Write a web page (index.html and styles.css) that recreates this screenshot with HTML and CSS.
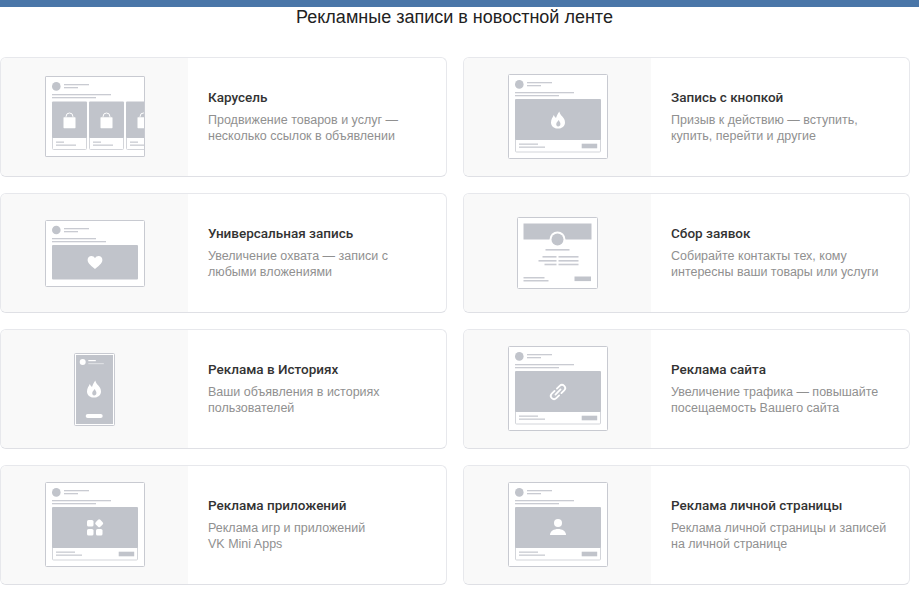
FILE: index.html
```html
<!DOCTYPE html>
<html lang="ru">
<head>
  <meta charset="UTF-8">
  <title>Рекламные записи в новостной ленте</title>
  <link rel="stylesheet" href="styles.css">
</head>
<body>

  <!-- shared parts of the previews -->
  <svg class="defs" width="0" height="0" aria-hidden="true">
    <defs>
      <symbol id="post-head" viewBox="0 0 100 25" width="100" height="25">
        <circle class="ph-dark" cx="11.3" cy="10.4" r="4.3"/>
        <rect class="ph-line" x="19" y="8" width="25" height="1.3"/>
        <rect class="ph-line" x="19" y="11" width="14" height="1.3"/>
        <rect class="ph-line" x="7" y="18" width="59" height="1.3"/>
        <rect class="ph-line" x="7" y="21" width="44" height="1.3"/>
      </symbol>
      <symbol id="post" viewBox="0 0 100 85" width="100" height="85">
        <rect class="ph-frame" x="0.5" y="0.5" width="99" height="84" rx="1"/>
        <use href="#post-head"/>
        <rect class="ph-foot" x="7.5" y="60" width="85" height="18" rx="1"/>
        <rect class="ph-dark" x="7" y="25" width="86" height="41" rx="1"/>
        <rect class="ph-line" x="11" y="69.5" width="19" height="1.3"/>
        <rect class="ph-line" x="11" y="72.5" width="26" height="1.3"/>
        <rect class="ph-dark" x="73.7" y="69.7" width="15.5" height="4.6"/>
      </symbol>
      <path id="flame" fill-rule="evenodd" d="M1.4-8.5C1.8-4.4 7-2.8 7 2.4 7 6 4 8.5 0 8.5S-7 6-7 2.4C-7-.8-5.2-2.8-4.2-5-3.7-3.6-3-2.6-2-2-1.4-4-.2-6.6 1.4-8.5ZM.4 6.6C2.2 6.4 2.8 4.4 2.2 2.8 1.8 1.8 1.2 1 .8 0-.1 1.2-.8 1.8-1.4 2.8-2.3 4.2-1.6 6.6.4 6.6Z"/>
      <g id="bag">
        <rect x="-6" y="-2.8" width="12" height="11" rx="0.6"/>
        <path class="ph-handle" d="M-3.4-2.8V-3.6A3.4 3.4 0 0 1 3.4-3.6V-2.8"/>
      </g>
    </defs>
  </svg>

  <div class="topbar"></div>
  <h1 class="page-title">Рекламные записи в новостной ленте</h1>

  <div class="ad-grid">

    <div class="ad-card">
      <div class="ad-preview">
        <svg width="100" height="81" viewBox="0 0 100 81">
          <rect class="ph-frame" x="0.5" y="0.5" width="99" height="80" rx="1"/>
          <use href="#post-head"/>
          <rect class="ph-foot" x="7.5" y="50" width="34" height="23.5" rx="1"/>
          <rect class="ph-dark" x="7" y="25.5" width="35" height="36.5" rx="1"/>
          <rect class="ph-foot" x="44.5" y="50" width="34" height="23.5" rx="1"/>
          <rect class="ph-dark" x="44" y="25.5" width="35" height="36.5" rx="1"/>
          <rect class="ph-foot" x="81.5" y="50" width="34" height="23.5" rx="1"/>
          <rect class="ph-dark" x="81" y="25.5" width="35" height="36.5" rx="1"/>
          <rect class="ph-line" x="11" y="65.5" width="8" height="1.3"/>
          <rect class="ph-line" x="11" y="68.5" width="20" height="1.3"/>
          <rect class="ph-line" x="48" y="65.5" width="8" height="1.3"/>
          <rect class="ph-line" x="48" y="68.5" width="20" height="1.3"/>
          <rect class="ph-line" x="85" y="65.5" width="8" height="1.3"/>
          <rect class="ph-line" x="85" y="68.5" width="14" height="1.3"/>
          <use class="ph-icon" href="#bag" x="24.5" y="44"/>
          <use class="ph-icon" href="#bag" x="61.5" y="44"/>
          <use class="ph-icon" href="#bag" x="98.5" y="44"/>
          <rect class="ph-edge" x="0.5" y="0.5" width="99" height="80" rx="1"/>
        </svg>
      </div>
      <div class="ad-text">
        <div class="ad-title">Карусель</div>
        <div class="ad-desc">Продвижение товаров и услуг —<br>несколько ссылок в объявлении</div>
      </div>
    </div>

    <div class="ad-card">
      <div class="ad-preview">
        <svg width="100" height="85" viewBox="0 0 100 85">
          <use href="#post"/>
          <use class="ph-icon" href="#flame" x="50" y="46"/>
        </svg>
      </div>
      <div class="ad-text">
        <div class="ad-title">Запись с кнопкой</div>
        <div class="ad-desc">Призыв к действию — вступить,<br>купить, перейти и другие</div>
      </div>
    </div>

    <div class="ad-card">
      <div class="ad-preview">
        <svg class="no-lift" width="100" height="67" viewBox="0 0 100 67">
          <rect class="ph-frame" x="0.5" y="0.5" width="99" height="66" rx="1"/>
          <circle class="ph-dark" cx="11.3" cy="10" r="4.3"/>
          <rect class="ph-line" x="19" y="8" width="25" height="1.3"/>
          <rect class="ph-line" x="19" y="11" width="14" height="1.3"/>
          <rect class="ph-line" x="7" y="18" width="44" height="1.3"/>
          <rect class="ph-line" x="7" y="21" width="54" height="1.3"/>
          <rect class="ph-dark" x="7" y="25" width="86" height="34.5" rx="1"/>
          <path class="ph-icon" d="M50 49C47 46.4 42.6 43.6 42.6 40 42.6 37.6 44.4 36 46.4 36 47.9 36 49.2 36.8 50 38.2 50.8 36.8 52.1 36 53.6 36 55.6 36 57.4 37.6 57.4 40 57.4 43.6 53 46.4 50 49Z"/>
        </svg>
      </div>
      <div class="ad-text">
        <div class="ad-title">Универсальная запись</div>
        <div class="ad-desc">Увеличение охвата — записи с<br>любыми вложениями</div>
      </div>
    </div>

    <div class="ad-card">
      <div class="ad-preview">
        <svg class="no-lift" width="81" height="72" viewBox="0 0 81 72">
          <rect class="ph-frame" x="0.5" y="0.5" width="80" height="71" rx="1"/>
          <rect class="ph-dark" x="6.5" y="6.5" width="68" height="16"/>
          <circle class="ph-icon" cx="40.5" cy="22.5" r="8"/>
          <circle class="ph-dark" cx="40.5" cy="22.5" r="6"/>
          <rect class="ph-line" x="28.5" y="32" width="24" height="1.6"/>
          <rect class="ph-line" x="25.5" y="39" width="14" height="1.6"/>
          <rect class="ph-line" x="41.5" y="39" width="20" height="1.6"/>
          <rect class="ph-line" x="21.5" y="43" width="18" height="1.6"/>
          <rect class="ph-line" x="41.5" y="43" width="20" height="1.6"/>
          <rect class="ph-line" x="27.5" y="46.7" width="12" height="1.6"/>
          <rect class="ph-line" x="41.5" y="46.7" width="20" height="1.6"/>
          <rect class="ph-line" x="6.5" y="60" width="21" height="1.5"/>
          <rect class="ph-line" x="6.5" y="63" width="25" height="1.5"/>
          <rect class="ph-dark" x="57.5" y="59.5" width="16.5" height="4.6"/>
        </svg>
      </div>
      <div class="ad-text">
        <div class="ad-title">Сбор заявок</div>
        <div class="ad-desc">Собирайте контакты тех, кому<br>интересны ваши товары или услуги</div>
      </div>
    </div>

    <div class="ad-card">
      <div class="ad-preview">
        <svg class="no-lift" width="41" height="73" viewBox="0 0 41 73">
          <rect class="ph-frame" x="0.5" y="0.5" width="40" height="72" rx="1"/>
          <rect class="ph-dark" x="2" y="2" width="37" height="69"/>
          <circle class="ph-icon" cx="8.7" cy="9" r="3"/>
          <rect class="ph-icon" x="14.3" y="7" width="7.5" height="1.2"/>
          <rect class="ph-faint" x="14.3" y="10" width="15.5" height="1.2"/>
          <use class="ph-icon" href="#flame" x="20" y="36"/>
          <rect class="ph-icon" x="11.7" y="61" width="17" height="4" rx="2"/>
        </svg>
      </div>
      <div class="ad-text">
        <div class="ad-title">Реклама в Историях</div>
        <div class="ad-desc">Ваши объявления в историях<br>пользователей</div>
      </div>
    </div>

    <div class="ad-card">
      <div class="ad-preview">
        <svg width="100" height="85" viewBox="0 0 100 85">
          <use href="#post"/>
          <path class="ph-link" transform="translate(50 46) rotate(45)" d="M-3.2-1.6V-5.6A3.2 3.2 0 0 1 3.2-5.6V-1.6M-3.2 1.6V5.6A3.2 3.2 0 0 0 3.2 5.6V1.6M0-3.6V3.6"/>
        </svg>
      </div>
      <div class="ad-text">
        <div class="ad-title">Реклама сайта</div>
        <div class="ad-desc">Увеличение трафика — повышайте<br>посещаемость Вашего сайта</div>
      </div>
    </div>

    <div class="ad-card">
      <div class="ad-preview">
        <svg width="100" height="85" viewBox="0 0 100 85">
          <use href="#post"/>
          <g class="ph-icon">
            <rect x="42" y="38" width="6.5" height="6.5" rx="1.6"/>
            <rect x="42" y="47" width="6.5" height="6.5" rx="1.6"/>
            <rect x="51" y="47" width="6.5" height="6.5" rx="1.6"/>
            <rect x="51" y="38" width="6.5" height="6.5" rx="1.6" transform="rotate(45 54.2 41.2)"/>
          </g>
        </svg>
      </div>
      <div class="ad-text">
        <div class="ad-title">Реклама приложений</div>
        <div class="ad-desc">Реклама игр и приложений<br>VK Mini Apps</div>
      </div>
    </div>

    <div class="ad-card">
      <div class="ad-preview">
        <svg width="100" height="85" viewBox="0 0 100 85">
          <use href="#post"/>
          <g class="ph-icon">
            <circle cx="50" cy="41" r="4"/>
            <path d="M42 53C42 49 46 47 50 47S58 49 58 53Z"/>
          </g>
        </svg>
      </div>
      <div class="ad-text">
        <div class="ad-title">Реклама личной страницы</div>
        <div class="ad-desc">Реклама личной страницы и записей<br>на личной странице</div>
      </div>
    </div>

  </div>

</body>
</html>
```

FILE: styles.css
```css
body, html {
  margin: 0;
  padding: 0;
  background-color: #fff;
  font-family: 'Liberation Sans', Arial, sans-serif;
  color: #222;
}

.defs {
  position: absolute;
}

.topbar {
  height: 7px;
  background-color: #4a76a8;
}

.page-title {
  margin: 0;
  padding-right: 10px;
  height: 50px;
  font-size: 18px;
  font-weight: normal;
  line-height: 20px;
  text-align: center;
  color: #222;
}

.ad-grid {
  display: grid;
  grid-template-columns: 447px 447px;
  grid-auto-rows: 120px;
  gap: 16px;
}

.ad-card {
  display: flex;
  box-sizing: border-box;
  background-color: #fff;
  border: 1px solid #e7e8ec;
  border-bottom-color: #dfe0e5;
  border-radius: 6px;
  overflow: hidden;
}

.ad-preview {
  display: flex;
  flex: 0 0 187px;
  align-items: center;
  justify-content: center;
  background-color: #f9f9f9;
}

.ad-preview svg {
  margin-bottom: 1px;
}

.ad-preview .no-lift {
  margin-bottom: 0;
}

.ad-text {
  display: flex;
  flex-direction: column;
  justify-content: center;
  padding-left: 20px;
}

.ad-title {
  margin-bottom: 7px;
  font-family: Roboto, 'Liberation Sans', sans-serif;
  font-size: 13.5px;
  font-weight: 500;
  line-height: 15px;
  color: #333;
}

.ad-desc {
  font-size: 12.5px;
  line-height: 16px;
  color: #909090;
}

/* preview pieces */
.ph-frame {
  fill: #fff;
  stroke: #c8cad1;
}

.ph-edge {
  fill: none;
  stroke: #c8cad1;
}

.ph-dark {
  fill: #c1c4cb;
}

.ph-line {
  fill: #c9cbd2;
}

.ph-foot {
  fill: #fff;
  stroke: #d3d5da;
}

.ph-icon {
  fill: #fff;
}

.ph-faint {
  fill: #dcdee2;
}

.ph-handle {
  fill: none;
  stroke: #fff;
  stroke-width: 1;
}

.ph-link {
  fill: none;
  stroke: #fff;
  stroke-width: 1.8;
  stroke-linecap: round;
}
```
